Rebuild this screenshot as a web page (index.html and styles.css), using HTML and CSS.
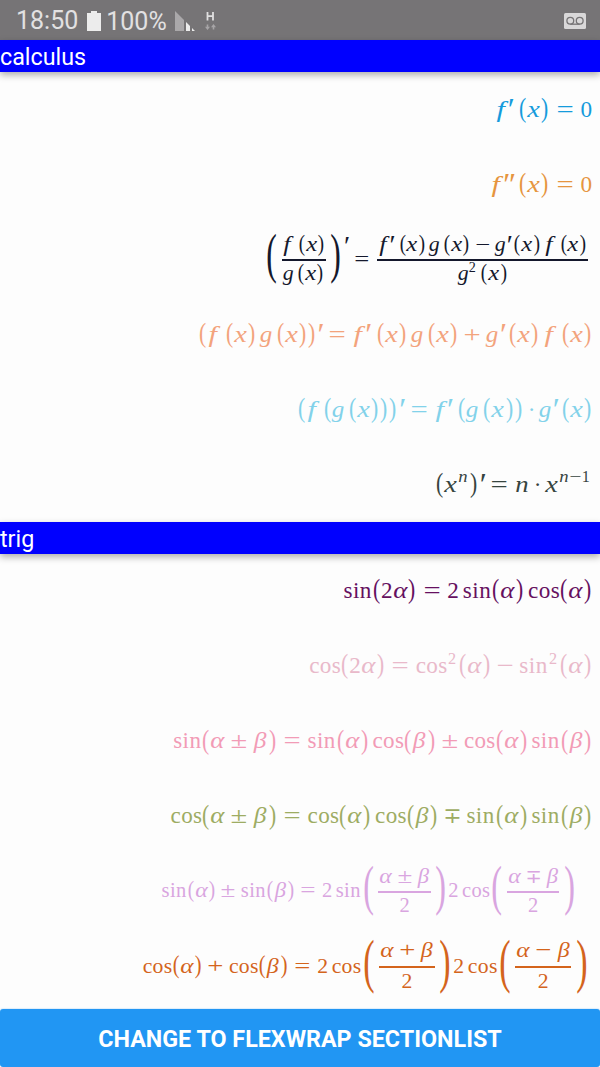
FILE: index.html
```html
<!DOCTYPE html>
<html lang="en">
<head>
<meta charset="utf-8">
<title>Formulas</title>
<link rel="stylesheet" href="styles.css">
</head>
<body>
<div class="app">
  <header class="status">
    <span class="clock">18:50</span>
    <svg class="battery" width="14" height="20" viewBox="0 0 14 20"><path d="M4 0h6v2h4v18H0V2h4z" fill="#ececec"/></svg>
    <span class="level">100%</span>
    <svg class="signal" width="20" height="20" viewBox="0 0 20 20"><path d="M0 0L9 9V20H0z" fill="#aaa8aa"/><path d="M11 11L15 15V20H11zM17 17L20 20H17z" fill="#ececec"/></svg>
    <svg class="data" width="12" height="20" viewBox="0 0 12 20"><path d="M2.500 1V9.500M8 1V9.500M2.500 5.200H8" stroke="#e0dfe0" stroke-width="1.800" fill="none"/><path d="M2.500 13.500V17M8.500 15V18.500" stroke="#a7a5a7" stroke-width="1.600"/><path d="M0 15.800H5L2.500 19zM6 16.200H11L8.500 13z" fill="#a7a5a7"/></svg>
    <svg class="voicemail" width="22" height="16" viewBox="0 0 22 16"><rect width="22" height="16" rx="1.500" fill="#d9d8d9"/><g fill="none" stroke="#767476" stroke-width="1.300"><circle cx="6.300" cy="7.800" r="3.400"/><circle cx="15.700" cy="7.800" r="3.400"/><path d="M6.300 11.200H15.700"/></g></svg>
  </header>

  <main class="list">
    <h2 class="section">calculus</h2>
    <div class="row sky"><div class="run"><i class="f">f</i><i class="pr">′</i><u></u><b>(</b><i class="x">x</i><b>)</b><s>=</s><span class="n">0</span></div></div>
    <div class="row amber"><div class="run"><i class="f">f</i><i class="pr">′</i><i class="pr">′</i><u></u><b>(</b><i class="x">x</i><b>)</b><s>=</s><span class="n">0</span></div></div>
    <div class="row navy">
      <span class="big">(</span>
      <div class="frac">
        <div class="num"><i class="f">f</i><u></u><b>(</b><i class="x">x</i><b>)</b></div>
        <div class="den"><i class="g">g</i><u></u><b>(</b><i class="x">x</i><b>)</b></div>
      </div>
      <span class="big">)</span>
      <div class="run"><i class="pr high">′</i><s>=</s></div>
      <div class="frac">
        <div class="num"><i class="f">f</i><i class="pr">′</i><u></u><b>(</b><i class="x">x</i><b>)</b><u></u><i class="g">g</i><u></u><b>(</b><i class="x">x</i><b>)</b><s class="bin">−</s><i class="g">g</i><i class="pr">′</i><u></u><b>(</b><i class="x">x</i><b>)</b><u></u><i class="f">f</i><u></u><b>(</b><i class="x">x</i><b>)</b></div>
        <div class="den"><i class="g">g</i><sup>2</sup><u></u><b>(</b><i class="x">x</i><b>)</b></div>
      </div>
    </div>
    <div class="row peach"><div class="run"><b>(</b><i class="f">f</i><u></u><b>(</b><i class="x">x</i><b>)</b><u></u><i class="g">g</i><u></u><b>(</b><i class="x">x</i><b>)</b><b>)</b><i class="pr">′</i><s>=</s><i class="f">f</i><i class="pr">′</i><u></u><b>(</b><i class="x">x</i><b>)</b><u></u><i class="g">g</i><u></u><b>(</b><i class="x">x</i><b>)</b><s class="bin">+</s><i class="g">g</i><i class="pr">′</i><u></u><b>(</b><i class="x">x</i><b>)</b><u></u><i class="f">f</i><u></u><b>(</b><i class="x">x</i><b>)</b></div></div>
    <div class="row aqua"><div class="run"><b>(</b><i class="f">f</i><u></u><b>(</b><i class="g">g</i><u></u><b>(</b><i class="x">x</i><b>)</b><b>)</b><b>)</b><i class="pr">′</i><s>=</s><i class="f">f</i><i class="pr">′</i><u></u><b>(</b><i class="g">g</i><u></u><b>(</b><i class="x">x</i><b>)</b><b>)</b><s class="dot">·</s><i class="g">g</i><i class="pr">′</i><u></u><b>(</b><i class="x">x</i><b>)</b></div></div>
    <div class="row slate"><div class="run"><b>(</b><i class="x">x</i><sup><i class="nn">n</i></sup><b>)</b><i class="pr">′</i><s>=</s><i class="nn">n</i><s class="dot">·</s><i class="x">x</i><sup><i class="nn">n</i><s class="tight">−</s><span class="n">1</span></sup></div></div>

    <h2 class="section">trig</h2>
    <div class="row plum"><div class="run"><span class="sin">sin</span><b>(</b><span class="n">2</span><i class="a">α</i><b>)</b><s>=</s><span class="n">2</span><u></u><span class="sin">sin</span><b>(</b><i class="a">α</i><b>)</b><u></u><span class="cos">cos</span><b>(</b><i class="a">α</i><b>)</b></div></div>
    <div class="row blush"><div class="run"><span class="cos">cos</span><b>(</b><span class="n">2</span><i class="a">α</i><b>)</b><s>=</s><span class="cos">cos</span><sup>2</sup><b>(</b><i class="a">α</i><b>)</b><s class="bin">−</s><span class="sin">sin</span><sup>2</sup><b>(</b><i class="a">α</i><b>)</b></div></div>
    <div class="row pink"><div class="run"><span class="sin">sin</span><b>(</b><i class="a">α</i><s class="bin">±</s><i class="be">β</i><b>)</b><s>=</s><span class="sin">sin</span><b>(</b><i class="a">α</i><b>)</b><u></u><span class="cos">cos</span><b>(</b><i class="be">β</i><b>)</b><s class="bin">±</s><span class="cos">cos</span><b>(</b><i class="a">α</i><b>)</b><u></u><span class="sin">sin</span><b>(</b><i class="be">β</i><b>)</b></div></div>
    <div class="row olive"><div class="run"><span class="cos">cos</span><b>(</b><i class="a">α</i><s class="bin">±</s><i class="be">β</i><b>)</b><s>=</s><span class="cos">cos</span><b>(</b><i class="a">α</i><b>)</b><u></u><span class="cos">cos</span><b>(</b><i class="be">β</i><b>)</b><s class="bin mp">∓</s><span class="sin">sin</span><b>(</b><i class="a">α</i><b>)</b><u></u><span class="sin">sin</span><b>(</b><i class="be">β</i><b>)</b></div></div>
    <div class="row lilac">
      <div class="run"><span class="sin">sin</span><b>(</b><i class="a">α</i><b>)</b><s class="bin">±</s><span class="sin">sin</span><b>(</b><i class="be">β</i><b>)</b><s>=</s><span class="n">2</span><u></u><span class="sin">sin</span></div>
      <span class="big">(</span>
      <div class="frac"><div class="num"><i class="a">α</i><s class="bin">±</s><i class="be">β</i></div><div class="den">2</div></div>
      <span class="big">)</span>
      <div class="run"><span class="n">2</span><u></u><span class="cos">cos</span></div>
      <span class="big">(</span>
      <div class="frac"><div class="num"><i class="a">α</i><s class="bin mp">∓</s><i class="be">β</i></div><div class="den">2</div></div>
      <span class="big">)</span>
    </div>
    <div class="row rust">
      <div class="run"><span class="cos">cos</span><b>(</b><i class="a">α</i><b>)</b><s class="bin">+</s><span class="cos">cos</span><b>(</b><i class="be">β</i><b>)</b><s>=</s><span class="n">2</span><u></u><span class="cos">cos</span></div>
      <span class="big">(</span>
      <div class="frac"><div class="num"><i class="a">α</i><s class="bin">+</s><i class="be">β</i></div><div class="den">2</div></div>
      <span class="big">)</span>
      <div class="run"><span class="n">2</span><u></u><span class="cos">cos</span></div>
      <span class="big">(</span>
      <div class="frac"><div class="num"><i class="a">α</i><s class="bin">−</s><i class="be">β</i></div><div class="den">2</div></div>
      <span class="big">)</span>
    </div>
  </main>
  <button class="toggle">CHANGE TO FLEXWRAP SECTIONLIST</button>
</div>
</body>
</html>
```

FILE: styles.css
```css
* { box-sizing: border-box; }
body { margin: 0; background: #fdfdfd; font-family: Roboto, sans-serif; }
.app { width: 600px; height: 1067px; display: flex; flex-direction: column; overflow: hidden; }

.status { flex: none; height: 40px; padding: 0 14px 0 16px; background: #767476; color: #e2e1e2; display: flex; align-items: center; font-size: 25px; line-height: 40px; }
.clock { padding-top: 1px; }
.battery { margin-left: 9px; margin-top: 2px; }
.level { margin-left: 5px; padding-top: 3px; }
.signal { margin-left: 8px; margin-top: 2px; }
.data { margin-left: 10px; margin-top: 2px; }
.voicemail { margin-left: auto; margin-top: 2px; }

.list { flex: 1; min-height: 0; }
.section { position: relative; margin: 0; height: 32px; background: #0000ff; color: #fff; font-size: 23.3px; font-weight: 400; line-height: 35px; box-shadow: 0 3px 7px rgba(0, 0, 0, .32); }

/* Formula rows: every glyph sits in a cell as wide as its maths-font advance */
.row { height: 75px; padding-right: 8px; display: flex; align-items: center; justify-content: flex-end; font-family: "Liberation Serif", "DejaVu Serif", serif; font-size: 23.2px; white-space: nowrap; }
.run { line-height: 1.2; padding-bottom: .09em; }
.row i, .row b, .row u, .row s, .row .n, .sin, .cos { display: inline-block; line-height: 0; text-align: center; text-decoration: none; font-weight: 400; }
.row u { width: .167em; }
.row b { width: .354em; font-size: 1.1em; transform: scale(.85, 1.06); }
.row .n { width: .5em; }
.row s { width: .778em; margin: 0 .278em; transform: scaleX(1.32); }
.row s.bin { margin: 0 .222em; }
.row s.dot { width: .278em; margin: 0 .222em; transform: none; }
.row s.tight { margin: 0; }
.row s.mp { font-family: "DejaVu Sans", sans-serif; font-size: .95em; width: .819em; margin: 0 .234em; transform: none; }
.f { width: .597em; transform: translateX(-.05em) scaleX(1.3); }
.x { width: .572em; transform: scaleX(1.22); }
.g { width: .513em; transform: scaleX(1.08); }
.a { width: .64em; transform: scaleX(1.16); }
.be { width: .619em; transform: scaleX(1.1); }
.nn { width: .6em; transform: scaleX(1.15); }
.row .pr { width: .174em; font-size: 1.4em; vertical-align: -.1em; transform: translateX(-.01em); }
.row .f + .pr, .row .pr + .pr { transform: translateX(-.09em); }
.row .pr + .pr { width: .138em; }
.row .pr.high { vertical-align: .38em; transform: translateX(-.03em); }
.sin { width: 1.228em; letter-spacing: .02em; }
.cos { width: 1.338em; letter-spacing: .015em; }
sup { display: inline-block; font-size: .7em; line-height: 0; vertical-align: .56em; padding: 0 .07em 0 .05em; }
.sin + sup, .cos + sup { padding: 0 .12em 0 .08em; }

.frac { margin: 0 .12em; text-align: center; }
.num { height: 1.55em; line-height: 1.6em; padding: 0 .04em; border-bottom: 1px solid currentColor; }
.den { height: 1.55em; line-height: 1.25em; border-top: 1px solid currentColor; }
.big { width: .376em; font-size: 1.96em; line-height: 1; text-align: center; transform: translateY(-.11em) scale(.8, 1.38); }

.sky { color: #159bdc; padding-top: 2px; }
.amber { color: #e6953f; padding-top: 2px; }
.navy { color: #14182c; font-size: 20.2px; padding-right: 10px; }
.peach { color: #f3a37c; padding-top: 3px; }
.aqua { color: #82d2ea; padding-top: 3px; }
.slate { color: #36443f; padding-top: 2px; padding-right: 9px; }
.plum { color: #66105f; }
.blush { color: #e9b9ca; padding-top: 1px; }
.pink { color: #f29bb6; font-size: 23.1px; }
.olive { color: #9dac63; font-size: 23.1px; }
.lilac { color: #d9a5e0; font-size: 20.5px; padding-right: 23px; }
.rust { color: #d4641c; font-size: 21.7px; padding-right: 10.5px; }

.toggle { flex: none; height: 58px; border: 0; border-radius: 3px; background: #2196f3; color: #fff; font: 700 23.3px/60px Roboto, sans-serif; padding: 0; box-shadow: 0 -1px 1px rgba(33, 150, 243, .15); }
```
